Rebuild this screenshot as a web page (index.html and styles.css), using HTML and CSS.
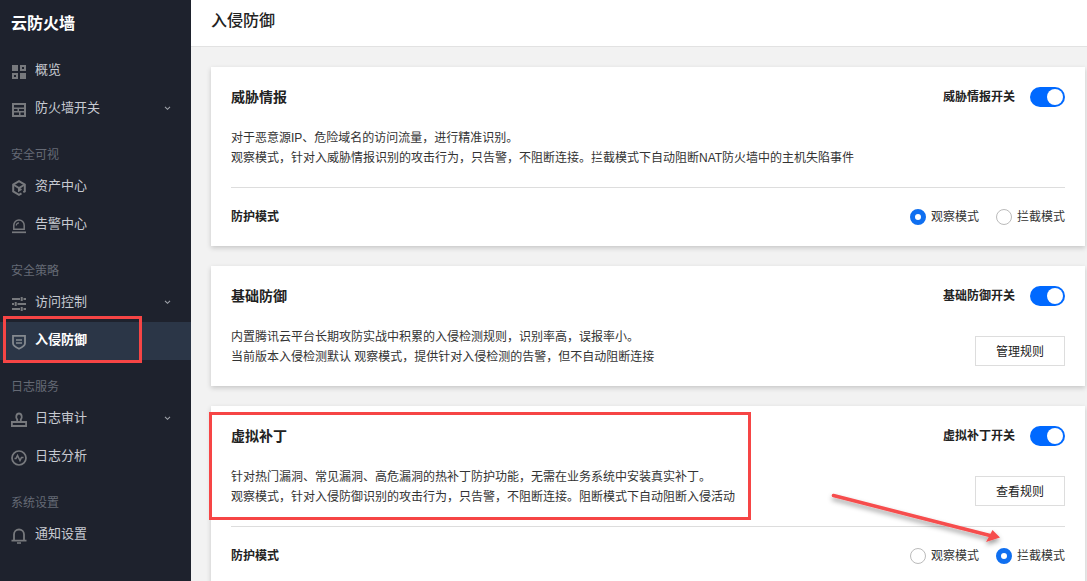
FILE: index.html
```html
<!DOCTYPE html>
<html lang="zh-CN">
<head>
<meta charset="utf-8">
<title>入侵防御</title>
<link rel="stylesheet" href="styles.css">
</head>
<body>
<div class="app">
  <aside class="sidebar">
    <div class="brand">云防火墙</div>
    <nav>
      <a class="item"><svg class="ico" viewBox="0 0 16 16"><path fill-rule="evenodd" d="M1 1h6v6H1zM9 1h6v6H9zM11 3v2h2V3zM1 9h6v6H1zM3 11v2h2v-2zM9 9h6v6H9z" fill="#77797d"/></svg><span>概览</span></a>
      <a class="item"><svg class="ico" viewBox="0 0 16 16"><path fill-rule="evenodd" d="M1 1h14v14H1zM3 3v2.500h10V3zM3 7v2h3.500V7zM8 7v2h5V7zM3 10.500V13h5v-2.500zM9.500 10.500V13H13v-2.500z" fill="#77797d"/></svg><span>防火墙开关</span><svg class="chev" viewBox="0 0 8 6"><path d="M1 1l3 3 3-3" fill="none" stroke="#a0a4ab" stroke-width="1.300"/></svg></a>
      <div class="group">安全可视</div>
      <a class="item"><svg class="ico" viewBox="0 0 16 16"><path d="M10.500 13.300L8 14.800l-5.800-3.400V4.600L8 1.200l5.800 3.400v6.800l-1.500.8" fill="none" stroke="#77797d" stroke-width="2"/><path d="M3 5l5 3 5-3M8 8v2.500l2.500-1.500" fill="none" stroke="#77797d" stroke-width="2"/></svg><span>资产中心</span></a>
      <a class="item"><svg class="ico" viewBox="0 0 16 16"><path d="M2.800 11.300V7.200a5.200 5.200 0 0 1 10.400 0v4.100z" fill="none" stroke="#77797d" stroke-width="1.500"/><path d="M1 14.300h14" stroke="#77797d" stroke-width="1.700"/><path d="M5.300 7.500a2.700 2.700 0 0 1 2.700-2.700" fill="none" stroke="#77797d" stroke-width="1.300"/></svg><span>告警中心</span></a>
      <div class="group">安全策略</div>
      <a class="item"><svg class="ico" viewBox="0 0 16 16"><path d="M1 3h8M12.500 3H15M1 8h2M6.500 8H15M1 13h8M12.500 13H15" stroke="#77797d" stroke-width="2"/><path d="M10.700 1v4M4.700 6v4M10.700 11v4" stroke="#77797d" stroke-width="2"/></svg><span>访问控制</span><svg class="chev" viewBox="0 0 8 6"><path d="M1 1l3 3 3-3" fill="none" stroke="#a0a4ab" stroke-width="1.300"/></svg></a>
      <a class="item active"><svg class="ico" viewBox="0 0 16 16"><path d="M2 1.800h12v7.400c0 2.800-3 4.200-6 5.600-3-1.400-6-2.800-6-5.600z" fill="none" stroke="#858a90" stroke-width="1.800"/><path d="M5 6h6M5 9h6" stroke="#858a90" stroke-width="1.600"/></svg><span>入侵防御</span></a>
      <div class="group">日志服务</div>
      <a class="item"><svg class="ico" viewBox="0 0 16 16"><path d="M6.200 9.800V7.500C4.500 6 5 1.500 8 1.500S11.500 6 9.800 7.500v2.300" fill="none" stroke="#77797d" stroke-width="1.800"/><path d="M.9 10h14.200v4H.9z" fill="none" stroke="#77797d" stroke-width="1.800"/></svg><span>日志审计</span><svg class="chev" viewBox="0 0 8 6"><path d="M1 1l3 3 3-3" fill="none" stroke="#a0a4ab" stroke-width="1.300"/></svg></a>
      <a class="item"><svg class="ico" viewBox="0 0 16 16"><circle cx="8" cy="8" r="7" fill="none" stroke="#77797d" stroke-width="1.700"/><path d="M3.500 8.500H5l1.500-3 2.500 5 1.500-3h2" fill="none" stroke="#77797d" stroke-width="1.500"/></svg><span>日志分析</span></a>
      <div class="group">系统设置</div>
      <a class="item"><svg class="ico" viewBox="0 0 16 16"><path d="M.5 12.700h15M3 12.700V6.500a5 5 0 0 1 10 0v6.200" fill="none" stroke="#77797d" stroke-width="1.800"/><path d="M6 15h4" stroke="#77797d" stroke-width="1.600"/></svg><span>通知设置</span></a>
    </nav>
  </aside>
  <main class="main">
    <header class="topbar">入侵防御</header>
    <div class="content">
      <section class="card">
        <div class="row">
          <h2>威胁情报</h2>
          <div class="toggle"><b>威胁情报开关</b><i class="switch"></i></div>
        </div>
        <div class="desc">
          <div>
            <p>对于恶意源IP、危险域名的访问流量，进行精准识别。</p>
            <p>观察模式，针对入威胁情报识别的攻击行为，只告警，不阻断连接。拦截模式下自动阻断NAT防火墙中的主机失陷事件</p>
          </div>
        </div>
        <div class="mode">
          <b>防护模式</b>
          <div class="radios">
            <label class="radio"><i class="dot on"></i><span>观察模式</span></label>
            <label class="radio"><i class="dot"></i><span>拦截模式</span></label>
          </div>
        </div>
      </section>
      <section class="card short">
        <div class="row">
          <h2>基础防御</h2>
          <div class="toggle"><b>基础防御开关</b><i class="switch"></i></div>
        </div>
        <div class="desc">
          <div>
            <p>内置腾讯云平台长期攻防实战中积累的入侵检测规则，识别率高，误报率小。</p>
            <p>当前版本入侵检测默认 观察模式，提供针对入侵检测的告警，但不自动阻断连接</p>
          </div>
          <button class="btn">管理规则</button>
        </div>
      </section>
      <section class="card">
        <div class="row">
          <h2>虚拟补丁</h2>
          <div class="toggle"><b>虚拟补丁开关</b><i class="switch"></i></div>
        </div>
        <div class="desc">
          <div>
            <p>针对热门漏洞、常见漏洞、高危漏洞的热补丁防护功能，无需在业务系统中安装真实补丁。</p>
            <p>观察模式，针对入侵防御识别的攻击行为，只告警，不阻断连接。阻断模式下自动阻断入侵活动</p>
          </div>
          <button class="btn">查看规则</button>
        </div>
        <div class="mode">
          <b>防护模式</b>
          <div class="radios">
            <label class="radio"><i class="dot"></i><span>观察模式</span></label>
            <label class="radio"><i class="dot on"></i><span>拦截模式</span></label>
          </div>
        </div>
      </section>
    </div>
  </main>
</div>
<div class="mark mark-nav"></div>
<div class="mark mark-card"></div>
<svg class="arrow" viewBox="0 0 1087 581">
  <defs><filter id="sh" x="-10%" y="-30%" width="120%" height="170%"><feDropShadow dx="0" dy="3" stdDeviation="2.500" flood-color="#000" flood-opacity=".4"/></filter></defs>
  <g filter="url(#sh)"><path d="M833.500 495.500L990 535.500" stroke="#f64d4d" stroke-width="3.500" stroke-linecap="round"/><path d="M1000 537.500L992.500 530 986 542z" fill="#f64d4d"/></g>
</svg>
</body>
</html>
```
FILE: styles.css
```css
* { box-sizing: border-box; }
html, body { margin: 0; height: 581px; overflow: hidden; }
body { font: 12px/20px "Liberation Sans", "Noto Sans CJK SC", sans-serif; color: #222; background: #f2f2f2; }
p, h2 { margin: 0; }
p { height: 20px; line-height: 22px; }
.app { display: flex; height: 581px; }
.sidebar { width: 191px; flex: none; background: #1e222d; color: #c7cad1; }
.brand { height: 52px; padding: 13px 0 0 11px; font-size: 16px; line-height: 22px; font-weight: 700; color: #fff; }
.item { display: flex; align-items: center; height: 38px; padding: 0 0 2px 11px; font-size: 13px; position: relative; }
.item span { margin-left: 8px; }
.item.active { background: #2b3647; color: #fff; font-weight: 700; }
.ico { width: 16px; height: 16px; flex: none; margin-top: 3px; }
.chev { position: absolute; left: 164px; top: 16px; width: 7px; height: 5px; }
.group { height: 40px; padding: 17px 0 0 11px; color: #656a75; font-size: 12px; line-height: 20px; }
.main { flex: 1; min-width: 0; }
.topbar { height: 47px; padding: 0 20px; background: #fff; border-bottom: 1px solid #e2e2e2; font-size: 16px; line-height: 42px; font-weight: 500; color: #222; }
.content { padding: 20px 2px 0 20px; display: flex; flex-direction: column; gap: 20px; }
.card { background: #fff; padding: 20px 20px 0; box-shadow: 0 2px 5px rgba(0,0,0,.18); flex: none; }
.card.short { padding-bottom: 20px; }
.row { display: flex; justify-content: space-between; align-items: center; height: 20px; }
h2 { font-size: 14px; line-height: 20px; font-weight: 700; color: #222; }
.toggle { display: flex; align-items: center; gap: 15px; }
.toggle b { font-weight: 700; }
.switch { display: block; width: 35px; height: 20px; border-radius: 10px; background: #0069ff; position: relative; }
.switch::after { content: ""; position: absolute; right: 2px; top: 2px; width: 16px; height: 16px; border-radius: 50%; background: #fff; }
.desc { display: flex; justify-content: space-between; align-items: flex-end; margin-top: 20px; color: #333; }
.btn { width: 90px; height: 30px; padding: 1px 0 0; font: inherit; line-height: 28px; color: #222; background: #fff; border: 1px solid #ddd; }
.mode { display: flex; justify-content: space-between; align-items: center; height: 59px; margin-top: 20px; border-top: 1px solid #ddd; }
.mode b { font-weight: 700; }
.radios { display: flex; gap: 17px; }
.radio { display: flex; align-items: center; gap: 5px; color: #333; }
.dot { display: block; width: 16px; height: 16px; border-radius: 50%; border: 1px solid #bbb; background: #fff; }
.dot.on { border: 5px solid #0f6ff0; }
.mark { position: absolute; border: 3px solid #f64545; }
.mark-nav { left: 3px; top: 316px; width: 139px; height: 47px; }
.mark-card { left: 209px; top: 412px; width: 542px; height: 108px; }
.arrow { position: absolute; left: 0; top: 0; width: 1087px; height: 581px; pointer-events: none; }
```
